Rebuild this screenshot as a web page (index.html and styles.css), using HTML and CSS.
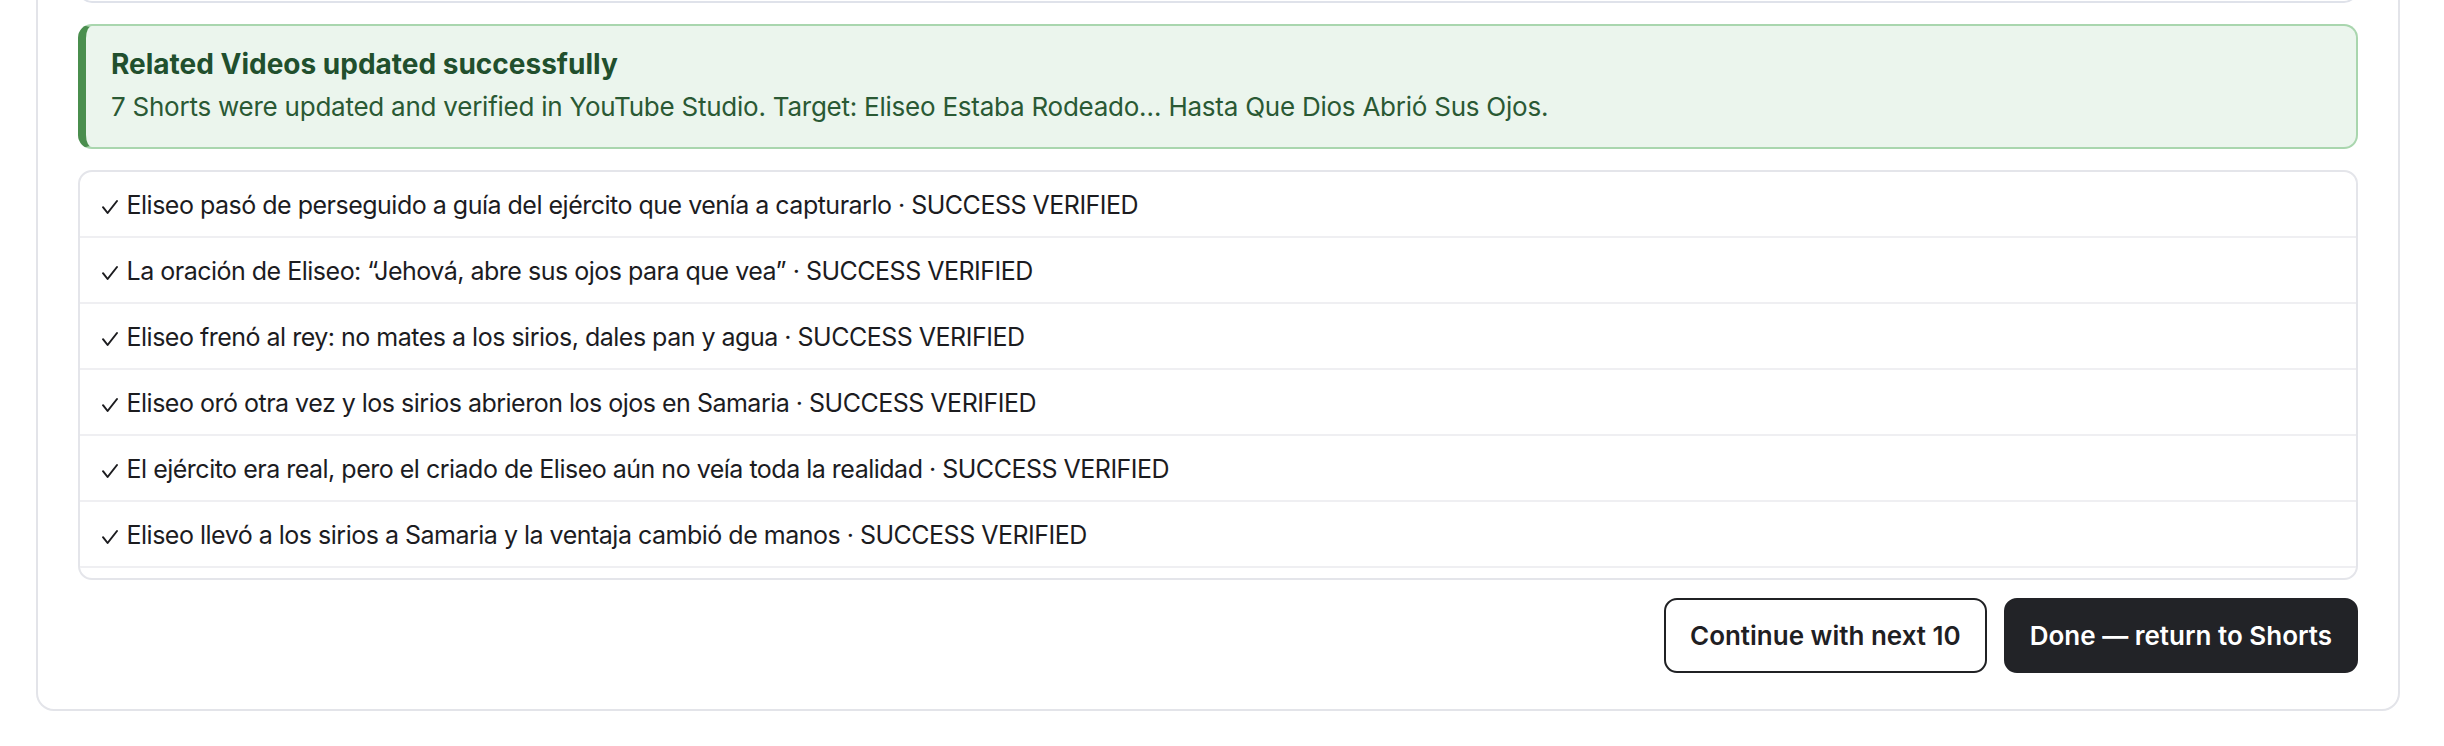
FILE: index.html
```html
<!DOCTYPE html>
<html lang="es">
<head>
<meta charset="utf-8">
<title>Related Videos updated</title>
<link rel="stylesheet" href="styles.css">
</head>
<body>
<div class="page">
  <section class="card">
    <div class="prev-panel"></div>
    <div class="alert">
      <div class="alert-title">Related Videos updated successfully</div>
      <div class="alert-body">7 Shorts were updated and verified in YouTube Studio. Target: Eliseo Estaba Rodeado… Hasta Que Dios Abrió Sus Ojos.</div>
    </div>
    <ul class="results">
      <li class="row"><svg class="check" viewBox="0 0 16 14" aria-label="✓"><path d="M1 7.2 L5.6 13 L15 1"/></svg> Eliseo pasó de perseguido a guía del ejército que venía a capturarlo · SUCCESS VERIFIED</li>
      <li class="row"><svg class="check" viewBox="0 0 16 14" aria-label="✓"><path d="M1 7.2 L5.6 13 L15 1"/></svg> La oración de Eliseo: “Jehová, abre sus ojos para que vea” · SUCCESS VERIFIED</li>
      <li class="row"><svg class="check" viewBox="0 0 16 14" aria-label="✓"><path d="M1 7.2 L5.6 13 L15 1"/></svg> Eliseo frenó al rey: no mates a los sirios, dales pan y agua · SUCCESS VERIFIED</li>
      <li class="row"><svg class="check" viewBox="0 0 16 14" aria-label="✓"><path d="M1 7.2 L5.6 13 L15 1"/></svg> Eliseo oró otra vez y los sirios abrieron los ojos en Samaria · SUCCESS VERIFIED</li>
      <li class="row"><svg class="check" viewBox="0 0 16 14" aria-label="✓"><path d="M1 7.2 L5.6 13 L15 1"/></svg> El ejército era real, pero el criado de Eliseo aún no veía toda la realidad · SUCCESS VERIFIED</li>
      <li class="row"><svg class="check" viewBox="0 0 16 14" aria-label="✓"><path d="M1 7.2 L5.6 13 L15 1"/></svg> Eliseo llevó a los sirios a Samaria y la ventaja cambió de manos · SUCCESS VERIFIED</li>
      <li class="row row-hidden" aria-hidden="true"></li>
    </ul>
    <div class="actions">
      <button class="btn btn-outline" type="button">Continue with next 10</button>
      <button class="btn btn-dark" type="button">Done — return to Shorts</button>
    </div>
  </section>
</div>
</body>
</html>
```
FILE: styles.css
```css
* { box-sizing: border-box; }

html, body {
  margin: 0;
  padding: 0;
  background: #ffffff;
}

body {
  font-family: Inter, "Noto Sans", "DejaVu Sans", sans-serif;
  color: #1d1d20;
  height: 746px;
  overflow: hidden;
}

.page {
  padding: 0 44px 0 36px;
  margin-top: -40px;
}

.card {
  border: 2px solid #e3e4e9;
  border-radius: 18px;
  padding: 0 40px 36px 40px;
  background: #ffffff;
}

.prev-panel {
  height: 41px;
  border: 2px solid #dfe2ea;
  border-top: none;
  border-radius: 0 0 14px 14px;
}

.alert {
  margin-top: 21px;
  background: #ebf5ed;
  border: 2px solid #a9d6ae;
  border-left: 8px solid #4a8e4e;
  border-radius: 14px;
  padding: 20px 30px 21px 25px;
  color: #225230;
}

.alert-title {
  font-size: 28px;
  line-height: 36px;
  font-weight: 700;
  color: #214f2d;
}

.alert-body {
  margin-top: 5px;
  font-size: 26px;
  line-height: 39px;
  letter-spacing: -0.24px;
  color: #2a5934;
}

.results {
  list-style: none;
  margin: 21px 0 0 0;
  padding: 0;
  height: 410px;
  overflow: hidden;
  border: 2px solid #e4e5ea;
  border-radius: 14px;
}

.row {
  font-size: 25px;
  line-height: 39px;
  letter-spacing: -0.5px;
  padding: 14px 21px 11px 22px;
  border-bottom: 2px solid #efeff2;
  color: #1c1c1f;
  white-space: nowrap;
}

.row-hidden {
  height: 66px;
}

.check {
  width: 16px;
  height: 14px;
  margin-right: 2px;
  vertical-align: baseline;
  fill: none;
  stroke: #1c1c1f;
  stroke-width: 2;
  stroke-linecap: round;
  stroke-linejoin: round;
  overflow: visible;
}

.actions {
  display: flex;
  justify-content: flex-end;
  gap: 17px;
  margin-top: 18px;
}

.btn {
  font-family: Inter, "Noto Sans", sans-serif;
  font-size: 26px;
  line-height: 39px;
  font-weight: 600;
  padding: 16px 24px;
  border-radius: 13px;
  border: 2px solid #202124;
  cursor: pointer;
}

.btn-outline {
  background: #ffffff;
  color: #1f2023;
}

.btn-dark {
  background: #222327;
  border-color: #222327;
  color: #ffffff;
}
```
